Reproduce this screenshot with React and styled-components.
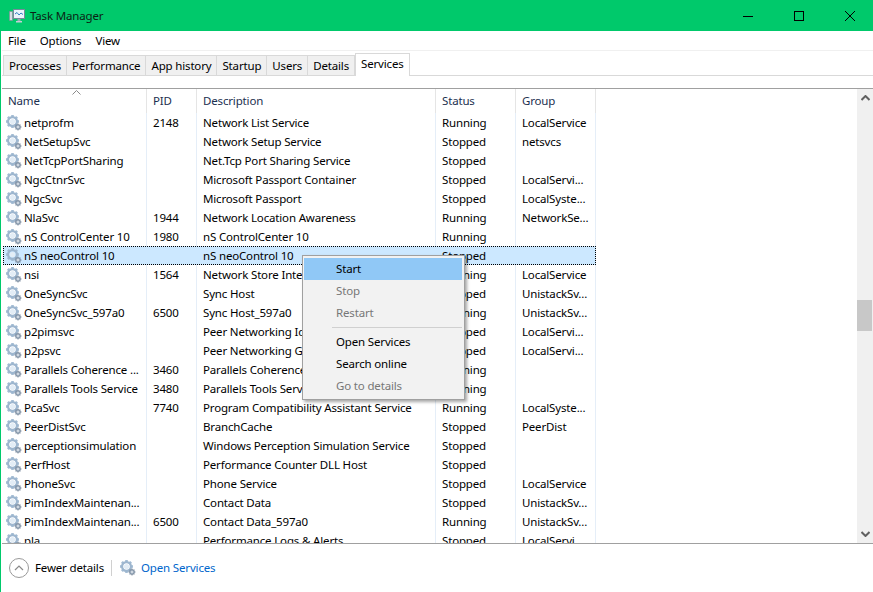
import React from 'react'
import styled, { createGlobalStyle } from 'styled-components'

const GlobalStyle = createGlobalStyle`
  html, body {
    margin: 0;
    padding: 0;
    background: #fff;
  }
  body {
    font-family: "Noto Sans", "Open Sans", sans-serif;
    font-size: 11.5px;
    letter-spacing: -0.16px;
    color: #000;
  }
`

const Window = styled.div`
  width: 873px;
  height: 592px;
  display: flex;
  flex-direction: column;
  box-sizing: border-box;
  border-left: 1px solid #00c96b;
  padding-left: 1px;
  overflow: hidden;
  position: relative;
`

const TitleBar = styled.div`
  height: 31px;
  margin-left: -2px;
  flex: none;
  background: #00c96b;
  display: flex;
  align-items: center;
  padding-left: 9px;
  gap: 5px;
`

const TitleText = styled.span`
  flex: 1;
  color: #0b1f14;
`

const WinButton = styled.div`
  width: 46px;
  height: 31px;
  display: flex;
  align-items: center;
  justify-content: center;
`

const MenuBar = styled.div`
  height: 19px;
  flex: none;
  display: flex;
  align-items: center;
  gap: 14px;
  padding-left: 6px;
  border-bottom: 1px solid #f0f0f0;
`

const TabStrip = styled.div`
  height: 24px;
  flex: none;
  display: flex;
  align-items: flex-end;
  padding-left: 1px;
  border-bottom: 1px solid #d9d9d9;
`

const Tab = styled.div`
  height: ${({ $active }) => ($active ? '23px' : '20px')};
  box-sizing: border-box;
  padding: ${({ $active }) => ($active ? '0 5px 3px' : '0 5px')};
  display: flex;
  align-items: center;
  background: ${({ $active }) => ($active ? '#fff' : '#f0f0f0')};
  border: 1px solid #d9d9d9;
  border-left-width: ${({ $first, $active }) => ($first || $active ? '1px' : '0')};
  border-bottom: 0;
  margin-bottom: ${({ $active }) => ($active ? '-1px' : '0')};
  position: relative;
`

const TableArea = styled.div`
  margin-top: 12px;
  height: 454px;
  flex: none;
  display: flex;
  border-top: 1px solid #a0a0a0;
  border-bottom: 1px solid #a0a0a0;
  overflow: hidden;
`

const Table = styled.div`
  width: 855px;
  flex: none;
  overflow: hidden;
  position: relative;
`

const HeaderRow = styled.div`
  height: 24px;
  width: 594px;
  display: grid;
  grid-template-columns: 145px 50px 239px 80px 80px;
  position: relative;
`

const HeaderCell = styled.div`
  padding: 0 0 2px 6px;
  display: flex;
  align-items: center;
  color: #1c3050;
  border-right: 1px solid #e5e5e5;
`

const SortCaret = styled.svg`
  position: absolute;
  left: 70px;
  top: 1px;
`

const Row = styled.div`
  height: 19px;
  display: grid;
  grid-template-columns: 145px 50px 239px 80px 80px;
  width: 594px;
  box-sizing: border-box;
  position: relative;
  z-index: 0;

  ${({ $selected }) => $selected && `
    &::before {
      content: '';
      position: absolute;
      inset: 0 0 0 1px;
      background: #cce8ff;
      border: 1px dotted #000;
      z-index: -1;
    }
  `}
`

const Cell = styled.div`
  padding-left: 6px;
  display: flex;
  align-items: center;
  gap: 2px;
  white-space: nowrap;
  overflow: hidden;
  border-right: 1px solid ${({ $selected }) => ($selected ? 'transparent' : '#e5eef8')};
  box-sizing: border-box;
`

const NameCell = styled(Cell)`
  padding-left: 4px;
`

const ScrollBar = styled.div`
  width: 16px;
  flex: none;
  background: #f0f0f0;
  display: flex;
  flex-direction: column;
  align-items: center;
  justify-content: space-between;
  position: relative;
`

const ScrollThumb = styled.div`
  position: absolute;
  top: 211px;
  left: 0;
  width: 15px;
  height: 31px;
  background: #c8c8c8;
`

const Arrow = styled.svg`
  margin: 6px 0;
`

const Footer = styled.div`
  flex: 1;
  display: flex;
  align-items: center;
  padding-left: 7px;
`

const CollapseCircle = styled.div`
  width: 18px;
  height: 18px;
  border: 1px solid #9a9a9a;
  border-radius: 50%;
  display: flex;
  align-items: center;
  justify-content: center;
  margin-right: 6px;
`

const FooterText = styled.span`
  margin-bottom: 2px;
`

const FooterDivider = styled.div`
  width: 1px;
  height: 16px;
  background: #d0d0d0;
  margin: 0 8px 0 7px;
`

const ServicesLink = styled.a`
  color: #0066cc;
  margin: 0 0 2px 5px;
`

const ContextMenu = styled.div`
  position: absolute;
  left: 301px;
  top: 255px;
  width: 163px;
  box-sizing: border-box;
  padding: 2px 2px 2px 1px;
  background: #f2f2f2;
  border: 1px solid #a0a0a0;
  box-shadow: 2px 2px 3px rgba(0, 0, 0, 0.35);
`

const MenuItem = styled.div`
  height: 22px;
  box-sizing: border-box;
  padding: 0 0 2px 32px;
  display: flex;
  align-items: center;
  background: ${({ $hot }) => ($hot ? '#90c8f6' : 'transparent')};
  color: ${({ $disabled }) => ($disabled ? '#777' : '#000')};
`

const MenuSeparator = styled.div`
  height: 1px;
  margin: 3px 0 3px 28px;
  background: #d0d0d0;
`

const rows = [
  ['netprofm', '2148', 'Network List Service', 'Running', 'LocalService'],
  ['NetSetupSvc', '', 'Network Setup Service', 'Stopped', 'netsvcs'],
  ['NetTcpPortSharing', '', 'Net.Tcp Port Sharing Service', 'Stopped', ''],
  ['NgcCtnrSvc', '', 'Microsoft Passport Container', 'Stopped', 'LocalServi...'],
  ['NgcSvc', '', 'Microsoft Passport', 'Stopped', 'LocalSyste...'],
  ['NlaSvc', '1944', 'Network Location Awareness', 'Running', 'NetworkSe...'],
  ['nS ControlCenter 10', '1980', 'nS ControlCenter 10', 'Running', ''],
  ['nS neoControl 10', '', 'nS neoControl 10', 'Stopped', ''],
  ['nsi', '1564', 'Network Store Interface Service', 'Running', 'LocalService'],
  ['OneSyncSvc', '', 'Sync Host', 'Stopped', 'UnistackSv...'],
  ['OneSyncSvc_597a0', '6500', 'Sync Host_597a0', 'Running', 'UnistackSv...'],
  ['p2pimsvc', '', 'Peer Networking Identity Manager', 'Stopped', 'LocalServi...'],
  ['p2psvc', '', 'Peer Networking Grouping', 'Stopped', 'LocalServi...'],
  ['Parallels Coherence ...', '3460', 'Parallels Coherence Service', 'Running', ''],
  ['Parallels Tools Service', '3480', 'Parallels Tools Service', 'Running', ''],
  ['PcaSvc', '7740', 'Program Compatibility Assistant Service', 'Running', 'LocalSyste...'],
  ['PeerDistSvc', '', 'BranchCache', 'Stopped', 'PeerDist'],
  ['perceptionsimulation', '', 'Windows Perception Simulation Service', 'Stopped', ''],
  ['PerfHost', '', 'Performance Counter DLL Host', 'Stopped', ''],
  ['PhoneSvc', '', 'Phone Service', 'Stopped', 'LocalService'],
  ['PimIndexMaintenan...', '', 'Contact Data', 'Stopped', 'UnistackSv...'],
  ['PimIndexMaintenan...', '6500', 'Contact Data_597a0', 'Running', 'UnistackSv...'],
  ['pla', '', 'Performance Logs & Alerts', 'Stopped', 'LocalServi...'],
]

const tabs = ['Processes', 'Performance', 'App history', 'Startup', 'Users', 'Details', 'Services']
const columns = ['Name', 'PID', 'Description', 'Status', 'Group']

function GearIcon() {
  const teeth = [0, 45, 90, 135, 180, 225, 270, 315]
  return (
    <svg width="16" height="16" viewBox="0 0 16 16" style={{ flex: 'none' }}>
      <g fill="#a4bcd4">
        {teeth.map((a) => (
          <rect key={a} x="5.2" y="0" width="2.6" height="3" transform={`rotate(${a} 6.5 6.5)`} />
        ))}
      </g>
      <circle cx="6.5" cy="6.5" r="4.4" fill="none" stroke="#9db6cf" strokeWidth="2.2" />
      <circle cx="6.5" cy="6.5" r="2.6" fill="#e3edf6" />
      <g fill="#75879b">
        {teeth.map((a) => (
          <rect key={a} x="11.4" y="8.6" width="1.2" height="1.6" transform={`rotate(${a} 12 12)`} />
        ))}
      </g>
      <circle cx="12" cy="12" r="2.3" fill="#a9b8c8" stroke="#75879b" strokeWidth="0.7" />
      <circle cx="12" cy="12" r="0.8" fill="#fff" />
    </svg>
  )
}

function AppIcon() {
  return (
    <svg width="16" height="15" viewBox="0 0 16 15">
      <rect x="0.5" y="3.5" width="3" height="9" fill="#d5dbe2" stroke="#7d8a96" strokeWidth="0.6" />
      <rect x="4.5" y="1.5" width="11" height="9" fill="#eaf4fb" stroke="#76899b" />
      <path d="M6 6 L8 4.5 L10 7 L12 5 L14 6.5" fill="none" stroke="#2f7fc0" strokeWidth="1" />
      <rect x="8.5" y="11" width="3" height="2" fill="#9aa6b2" />
      <rect x="7" y="13" width="6" height="1.5" fill="#c6ced6" />
    </svg>
  )
}

function App() {
  return (
    <Window>
      <GlobalStyle />
      <TitleBar>
        <AppIcon />
        <TitleText>Task Manager</TitleText>
        <WinButton>
          <svg width="10" height="10" viewBox="0 0 10 10">
            <path d="M0 5.5 H10" stroke="#000" strokeWidth="1" />
          </svg>
        </WinButton>
        <WinButton>
          <svg width="10" height="10" viewBox="0 0 10 10">
            <rect x="0.5" y="0.5" width="9" height="9" fill="none" stroke="#000" />
          </svg>
        </WinButton>
        <WinButton>
          <svg width="10" height="10" viewBox="0 0 10 10">
            <path d="M0 0 L10 10 M10 0 L0 10" stroke="#000" strokeWidth="1" />
          </svg>
        </WinButton>
      </TitleBar>
      <MenuBar>
        <span>File</span>
        <span>Options</span>
        <span>View</span>
      </MenuBar>
      <TabStrip>
        {tabs.map((t, i) => (
          <Tab key={t} $first={i === 0} $active={t === 'Services'}>{t}</Tab>
        ))}
      </TabStrip>
      <TableArea>
        <Table>
          <HeaderRow>
            {columns.map((c) => (
              <HeaderCell key={c}>{c}</HeaderCell>
            ))}
            <SortCaret width="9" height="5" viewBox="0 0 9 5">
              <path d="M0.5 4.5 L4.5 0.5 L8.5 4.5" fill="none" stroke="#8a8a8a" />
            </SortCaret>
          </HeaderRow>
          {rows.map((r, i) => {
            const selected = r[0] === 'nS neoControl 10'
            return (
              <Row key={i} $selected={selected}>
                <NameCell $selected={selected}>
                  <GearIcon />
                  {r[0]}
                </NameCell>
                {r.slice(1).map((v, j) => (
                  <Cell key={j} $selected={selected}>{v}</Cell>
                ))}
              </Row>
            )
          })}
        </Table>
        <ScrollBar>
          <Arrow width="9" height="6" viewBox="0 0 9 6">
            <path d="M0.5 5 L4.5 1 L8.5 5" fill="none" stroke="#606060" strokeWidth="2" />
          </Arrow>
          <ScrollThumb />
          <Arrow width="9" height="6" viewBox="0 0 9 6">
            <path d="M0.5 1 L4.5 5 L8.5 1" fill="none" stroke="#606060" strokeWidth="2" />
          </Arrow>
        </ScrollBar>
      </TableArea>
      <Footer>
        <CollapseCircle>
          <svg width="10" height="6" viewBox="0 0 10 6">
            <path d="M1 5 L5 1 L9 5" fill="none" stroke="#8a8a8a" strokeWidth="1.2" />
          </svg>
        </CollapseCircle>
        <FooterText>Fewer details</FooterText>
        <FooterDivider />
        <GearIcon />
        <ServicesLink>Open Services</ServicesLink>
      </Footer>
      <ContextMenu>
        <MenuItem $hot>Start</MenuItem>
        <MenuItem $disabled>Stop</MenuItem>
        <MenuItem $disabled>Restart</MenuItem>
        <MenuSeparator />
        <MenuItem>Open Services</MenuItem>
        <MenuItem>Search online</MenuItem>
        <MenuItem $disabled>Go to details</MenuItem>
      </ContextMenu>
    </Window>
  )
}

export default App
